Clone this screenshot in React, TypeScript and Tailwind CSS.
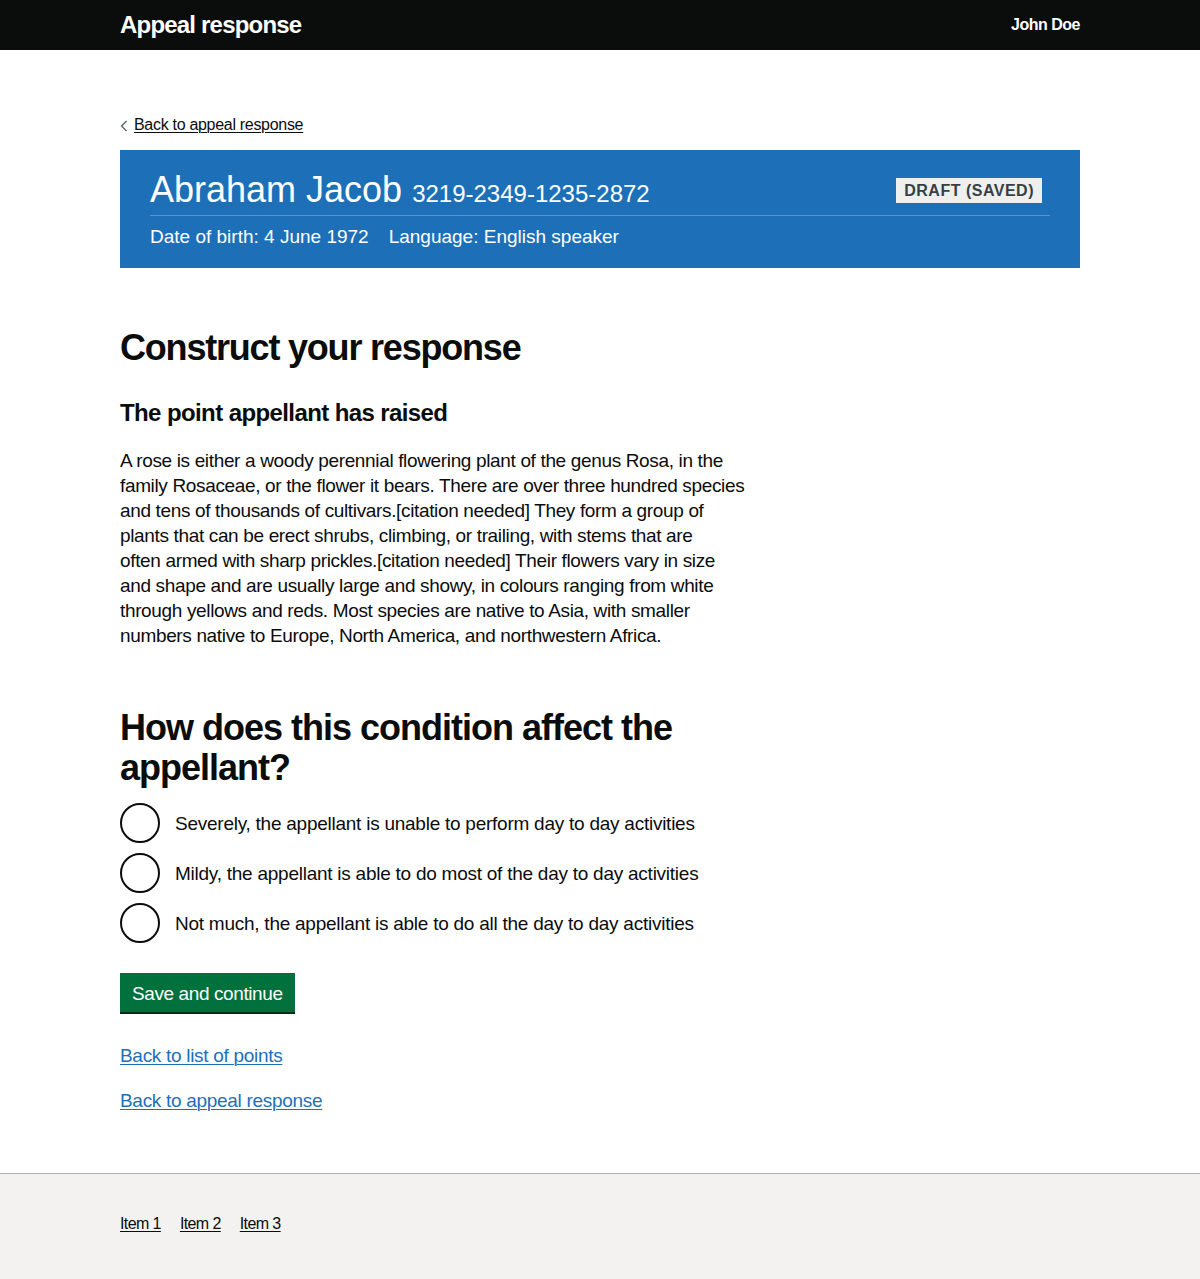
import React from "react";

const font = { fontFamily: '"Liberation Sans", Arial, sans-serif' };

function Radio({ label }: { label: string }) {
  return (
    <label className="flex items-center gap-[15px] h-[40px] cursor-pointer">
      <span className="w-[40px] h-[40px] rounded-full border-2 border-[#0b0c0c] bg-white shrink-0" />
      <span className="text-[19px] leading-[25px] text-[#0b0c0c] tracking-[-0.25px]">{label}</span>
    </label>
  );
}

const lines = [
  "A rose is either a woody perennial flowering plant of the genus Rosa, in the",
  "family Rosaceae, or the flower it bears. There are over three hundred species",
  "and tens of thousands of cultivars.[citation needed] They form a group of",
  "plants that can be erect shrubs, climbing, or trailing, with stems that are",
  "often armed with sharp prickles.[citation needed] Their flowers vary in size",
  "and shape and are usually large and showy, in colours ranging from white",
  "through yellows and reds. Most species are native to Asia, with smaller",
  "numbers native to Europe, North America, and northwestern Africa.",
];

export default function App() {
  return (
    <div className="min-h-[1279px] flex flex-col bg-white text-[#0b0c0c]" style={font}>
      <header className="bg-[#0b0c0c] h-[50px]">
        <div className="w-[960px] mx-auto h-full flex items-center justify-between">
          <span className="text-white font-bold text-[24px] tracking-[-0.8px] leading-none">Appeal response</span>
          <span className="text-white font-bold text-[16px] tracking-[-0.5px] leading-none">John Doe</span>
        </div>
      </header>

      <main className="w-[960px] mx-auto flex-1 pb-[60px]">
        <div className="pt-[65px] flex items-center gap-[6px]">
          <svg width="8" height="12" viewBox="0 0 8 12" className="mt-[1px]">
            <path d="M6.5 1 L1.5 6 L6.5 11" fill="none" stroke="#505a5f" strokeWidth="1.2" />
          </svg>
          <a href="#" className="text-[16px] leading-[20px] text-[#0b0c0c] underline underline-offset-2 decoration-1 tracking-[-0.3px]">
            Back to appeal response
          </a>
        </div>

        <section className="mt-[15px] bg-[#1d70b8] text-white px-[30px] pt-[20px] pb-[21px]">
          <div className="flex items-center justify-between border-b border-[#5694ca] pb-[5px]">
            <div className="flex items-baseline gap-[10px]">
              <span className="text-[36px] leading-[40px]">Abraham Jacob</span>
              <span className="text-[24px] leading-[30px]">3219-2349-1235-2872</span>
            </div>
            <span className="bg-[#eeefef] text-[#383f43] font-bold text-[16px] leading-[16px] tracking-[0.5px] px-[8px] pt-[5px] pb-[4px] mr-[8px] uppercase">
              Draft (saved)
            </span>
          </div>
          <div className="pt-[10px] flex gap-[20px] text-[19px] leading-[21px]">
            <span>Date of birth: 4 June 1972</span>
            <span>Language: English speaker</span>
          </div>
        </section>

        <h1 className="mt-[60px] text-[36px] leading-[40px] font-bold tracking-[-1.2px]">Construct your response</h1>
        <h2 className="mt-[30px] text-[24px] leading-[30px] font-bold tracking-[-0.6px]">The point appellant has raised</h2>
        <p className="mt-[20px] w-[640px] text-[19px] leading-[25px] tracking-[-0.35px]">
          {lines.map((l, i) => (
            <span key={i} className="block whitespace-nowrap">{l}</span>
          ))}
        </p>

        <fieldset className="mt-[60px] w-[630px]">
          <legend className="text-[36px] leading-[40px] font-bold tracking-[-1px] mb-[15px]">
            How does this condition affect the appellant?
          </legend>
          <div className="flex flex-col gap-[10px]">
            <Radio label="Severely, the appellant is unable to perform day to day activities" />
            <Radio label="Mildy, the appellant is able to do most of the day to day activities" />
            <Radio label="Not much, the appellant is able to do all the day to day activities" />
          </div>
        </fieldset>

        <button className="mt-[30px] bg-[#00703c] text-white text-[19px] leading-[19px] px-[12px] pt-[11px] pb-[9px] shadow-[0_2px_0_#002d18] tracking-[-0.4px]">
          Save and continue
        </button>

        <div className="mt-[31px] flex flex-col gap-[20px] items-start">
          <a href="#" className="text-[19px] leading-[25px] text-[#1d70b8] underline underline-offset-2 decoration-1 tracking-[-0.3px]">Back to list of points</a>
          <a href="#" className="text-[19px] leading-[25px] text-[#1d70b8] underline underline-offset-2 decoration-1 tracking-[-0.3px]">Back to appeal response</a>
        </div>
      </main>

      <footer className="bg-[#f3f2f1] border-t border-[#b1b4b6] h-[106px]">
        <div className="w-[960px] mx-auto pt-[40px] flex gap-[19px]">
          <a href="#" className="text-[16px] leading-[20px] text-[#0b0c0c] underline underline-offset-2 decoration-1 tracking-[-0.6px]">Item 1</a>
          <a href="#" className="text-[16px] leading-[20px] text-[#0b0c0c] underline underline-offset-2 decoration-1 tracking-[-0.6px]">Item 2</a>
          <a href="#" className="text-[16px] leading-[20px] text-[#0b0c0c] underline underline-offset-2 decoration-1 tracking-[-0.6px]">Item 3</a>
        </div>
      </footer>
    </div>
  );
}
